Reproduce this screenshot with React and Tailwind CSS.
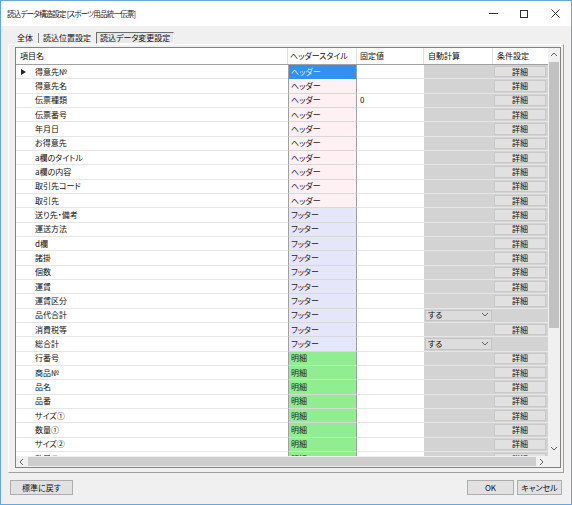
import React from "react";

const rows = [
  ["得意先№", "h", "", ""],
  ["得意先名", "h", "", ""],
  ["伝票種類", "h", "0", ""],
  ["伝票番号", "h", "", ""],
  ["年月日", "h", "", ""],
  ["お得意先", "h", "", ""],
  ["a欄のタイトル", "h", "", ""],
  ["a欄の内容", "h", "", ""],
  ["取引先コード", "h", "", ""],
  ["取引先", "h", "", ""],
  ["送り先・備考", "f", "", ""],
  ["運送方法", "f", "", ""],
  ["d欄", "f", "", ""],
  ["諸掛", "f", "", ""],
  ["個数", "f", "", ""],
  ["運賃", "f", "", ""],
  ["運賃区分", "f", "", ""],
  ["品代合計", "f", "", "する"],
  ["消費税等", "f", "", ""],
  ["総合計", "f", "", "する"],
  ["行番号", "m", "", ""],
  ["商品№", "m", "", ""],
  ["品名", "m", "", ""],
  ["品番", "m", "", ""],
  ["サイズ①", "m", "", ""],
  ["数量①", "m", "", ""],
  ["サイズ②", "m", "", ""],
  ["数量②", "m", "", ""],
];

const styleLabel = { h: "ヘッダー", f: "フッター", m: "明細" };

function Chevron({ dir = "down", className = "" }) {
  const paths = {
    up: "M1 5 L4 2 L7 5",
    down: "M1 2 L4 5 L7 2",
    left: "M5 1 L2 4 L5 7",
    right: "M2 1 L5 4 L2 7",
  };
  return (
    <svg width="8" height="8" viewBox="0 0 8 8" className={className}>
      <path d={paths[dir]} fill="none" stroke="#606060" strokeWidth="1" />
    </svg>
  );
}

function StyleCell({ kind, selected }) {
  if (selected) {
    return (
      <div className="w-[69px] h-full shrink-0 border-l border-r border-[#a0a0a0] bg-[#3390f0] text-[#d8ecff] flex items-center pl-[2px] border-b border-b-[#3390f0]">
        {styleLabel[kind]}
      </div>
    );
  }
  const bg =
    kind === "h" ? "bg-[#fff0f3]" : kind === "f" ? "bg-[#e6e6fa]" : "bg-[#90ee90]";
  return (
    <div
      className={`w-[69px] h-full shrink-0 border-l border-r border-[#a0a0a0] border-b border-b-[#d8d8d8] ${bg} flex items-center pl-[2px] text-[#202020]`}
    >
      {styleLabel[kind]}
    </div>
  );
}

function Row({ r, i }) {
  const [name, kind, fixed, dd] = r;
  return (
    <div className="flex h-[14.33px] shrink-0">
      <div className="w-[15px] h-full shrink-0 flex items-center justify-center border-b border-[#e6e6e6] bg-white">
        {i === 0 && (
          <svg width="5" height="6" viewBox="0 0 5 6">
            <path d="M0 0 L5 3 L0 6 Z" fill="#202020" />
          </svg>
        )}
      </div>
      <div className="w-[257px] h-full shrink-0 flex items-center pl-[4px] border-b border-[#e6e6e6] bg-white text-[#101010]">
        {name}
      </div>
      <StyleCell kind={kind} selected={i === 0} />
      <div className="w-[67px] h-full shrink-0 flex items-center pl-[3px] border-b border-[#e6e6e6] bg-white text-[#101010]">
        {fixed}
      </div>
      <div className="w-[69px] h-full shrink-0 border-b border-[#e6e6e6] bg-[#d3d3d3] flex items-stretch">
        {dd && (
          <div className="flex-1 m-[1px] bg-[#dcdcdc] border border-[#c4c4c4] flex items-center justify-between pl-[2px] pr-[2px] text-[#101010]">
            <span>{dd}</span>
            <Chevron dir="down" />
          </div>
        )}
      </div>
      <div className="w-[55px] h-full shrink-0 border-b border-[#e6e6e6] bg-[#d3d3d3] flex items-stretch py-[1px] pl-[1px] pr-[2px]">
        {!dd && (
          <div className="flex-1 bg-[#e1e1e1] border border-[#c8c8c8] flex items-center justify-center text-[#101010] text-[8px]">
            詳細
          </div>
        )}
      </div>
    </div>
  );
}

export default function App() {
  return (
    <div className="w-[572px] h-[505px] bg-[#f0f0f0] border border-[#6aa6d8] flex flex-col font-['Noto_Sans_CJK_JP',sans-serif] text-[8px] leading-none [font-feature-settings:'palt'] text-black overflow-hidden">
      {/* title bar */}
      <div className="h-[25px] shrink-0 bg-white flex items-center pl-[6px]">
        <span className="text-[7.5px] tracking-[-0.8px] text-[#202020]">読込データ構造設定 [スポーツ用品統一伝票]</span>
        <div className="ml-auto flex items-center h-full">
          <div className="w-[30px] h-full flex items-center justify-center">
            <div className="w-[9px] h-[1px] bg-[#303030]" />
          </div>
          <div className="w-[31px] h-full flex items-center justify-center">
            <div className="w-[8px] h-[8px] border border-[#303030]" />
          </div>
          <div className="w-[32px] h-full flex items-center justify-center">
            <svg width="9" height="9" viewBox="0 0 9 9">
              <path d="M0.5 0.5 L8.5 8.5 M8.5 0.5 L0.5 8.5" stroke="#303030" strokeWidth="1" />
            </svg>
          </div>
        </div>
      </div>

      {/* tabs */}
      <div className="h-[18px] shrink-0 flex items-end pl-[12px] pt-[5px]">
        <div className="h-[12px] flex items-center px-[4px] text-[#101010]">全体</div>
        <div className="w-[1px] h-[10px] bg-[#8a8a8a] mb-[1px] mx-[1px]" />
        <div className="h-[12px] flex items-center px-[3px] text-[#101010]">読込位置設定</div>
        <div className="h-[12px] flex items-center px-[3px] ml-[2px] border-t border-l border-[#6d6d6d] border-r border-b border-r-white border-b-white text-[#101010] bg-[#e8e8e8]">
          読込データ変更設定
        </div>
      </div>

      {/* tab page */}
      <div className="h-[429px] shrink-0 mx-[7px] border-t border-l border-white border-r border-b border-r-[#a0a0a0] border-b-[#a0a0a0] pt-[2px] pl-[6px] pr-[1px]">
        {/* grid */}
        <div className="w-[546px] h-[421px] border border-[#828282] bg-white flex flex-col">
          <div className="flex h-[408px]">
            {/* content */}
            <div className="w-[532px] h-full flex flex-col overflow-hidden">
              <div className="flex h-[17px] shrink-0 border-b border-[#a0a0a0] bg-white text-[#101010]">
                <div className="w-[272px] flex items-center pl-[4px] border-r border-[#e0e0e0]">項目名</div>
                <div className="w-[69px] flex items-center pl-[2px] border-r border-[#e0e0e0]">ヘッダースタイル</div>
                <div className="w-[67px] flex items-center pl-[3px] border-r border-[#e0e0e0]">固定値</div>
                <div className="w-[69px] flex items-center pl-[4px] border-r border-[#e0e0e0]">自動計算</div>
                <div className="w-[55px] flex items-center pl-[4px]">条件設定</div>
              </div>
              {rows.map((r, i) => (
                <Row key={i} r={r} i={i} />
              ))}
            </div>
            {/* vertical scrollbar */}
            <div className="w-[12px] h-full bg-[#f0f0f0] flex flex-col">
              <div className="h-[14px] flex items-center justify-center">
                <Chevron dir="up" />
              </div>
              <div className="h-[266px] mx-[1px] bg-[#c1c1c1]" />
              <div className="flex-1" />
              <div className="h-[14px] flex items-center justify-center">
                <Chevron dir="down" />
              </div>
            </div>
          </div>
          {/* horizontal scrollbar */}
          <div className="flex h-[11px] bg-[#f0f0f0]">
            <div className="w-[12px] flex items-center justify-center">
              <Chevron dir="left" />
            </div>
            <div className="w-[508px] my-[1px] bg-[#cdcdcd]" />
            <div className="w-[12px] flex items-center justify-center">
              <Chevron dir="right" />
            </div>
            <div className="w-[12px] bg-[#f0f0f0]" />
          </div>
        </div>
      </div>

      {/* bottom buttons */}
      <div className="flex-1 flex items-start pt-[7px] px-[9px]">
        <div className="w-[63px] h-[15px] bg-[#e1e1e1] border border-[#adadad] flex items-center justify-center text-[#101010]">
          標準に戻す
        </div>
        <div className="ml-auto flex gap-[3px]">
          <div className="w-[47px] h-[15px] bg-[#e1e1e1] border border-[#adadad] flex items-center justify-center text-[#101010]">
            OK
          </div>
          <div className="w-[45px] h-[15px] bg-[#e1e1e1] border border-[#adadad] flex items-center justify-center text-[#101010]">
            キャンセル
          </div>
        </div>
      </div>
    </div>
  );
}
